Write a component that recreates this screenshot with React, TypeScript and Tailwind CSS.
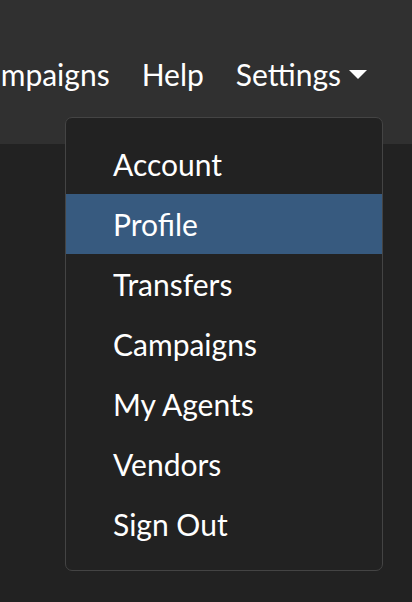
const items = ["Account", "Profile", "Transfers", "Campaigns", "My Agents", "Vendors", "Sign Out"];

export default function App() {
  return (
    <div className="relative min-h-[602px] w-full overflow-hidden bg-[#222222] font-['Lato','Noto_Sans',sans-serif] text-white">
      <nav className="flex h-[144px] items-start justify-end bg-[#303030] pr-[29px] pt-[52px] text-[30px] leading-[45px]">
        <a className="shrink-0 whitespace-nowrap px-4">Campaigns</a>
        <a className="shrink-0 whitespace-nowrap px-4">Help</a>
        <a className="flex shrink-0 items-center whitespace-nowrap px-4">
          Settings
          <span className="ml-[8px] mt-[0px] inline-block h-0 w-0 border-x-[9px] border-t-[9px] border-x-transparent border-t-white" />
        </a>
      </nav>
      <div className="absolute left-[65px] top-[117px] w-[318px] rounded-[7px] border border-[#444444] bg-[#222222] py-4">
        {items.map((item) => (
          <div
            key={item}
            className={`h-[60px] px-[47px] py-[7.5px] text-[30px] leading-[45px] ${item === "Profile" ? "bg-[#375a7f]" : ""}`}
          >
            {item}
          </div>
        ))}
      </div>
    </div>
  );
}
